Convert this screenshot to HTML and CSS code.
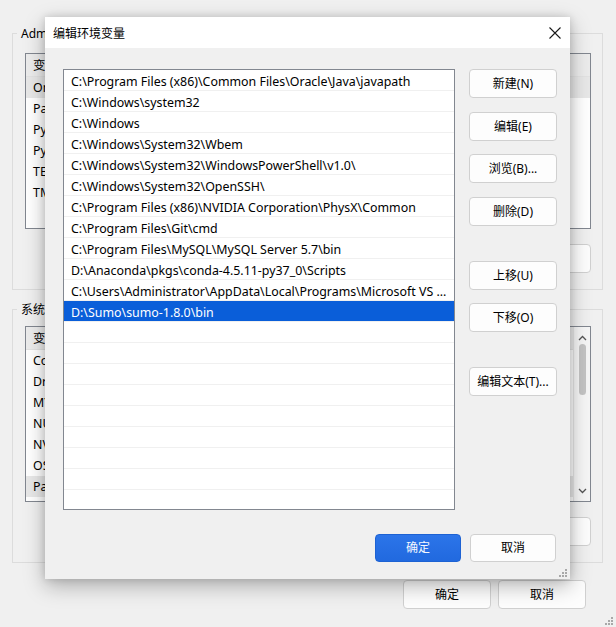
FILE: index.html
```html
<!DOCTYPE html>
<html lang="zh-CN">
<head>
<meta charset="utf-8">
<title>环境变量</title>
<link rel="stylesheet" href="styles.css">
</head>
<body>
<div class="window">
  <div class="group g1">
    <div class="group-title">Administrator 的用户变量(U)</div>
    <div class="lv lv-user">
      <div class="lv-main">
        <div class="lv-head"><span class="c1">变量</span><span class="c2">值</span></div>
        <div class="lv-row sel-inactive"><span class="c1">OneDrive</span><span class="c2">C:\Users\Administrator\OneDrive</span></div>
        <div class="lv-row"><span class="c1">Path</span><span class="c2">C:\Users\Administrator\AppData\Local\Programs</span></div>
        <div class="lv-row"><span class="c1">PyCharm</span><span class="c2">D:\PyCharm\bin;</span></div>
        <div class="lv-row"><span class="c1">PyCharm Community Edition</span><span class="c2">D:\PyCharm Community\bin;</span></div>
        <div class="lv-row"><span class="c1">TEMP</span><span class="c2">C:\Users\Administrator\AppData\Local\Temp</span></div>
        <div class="lv-row"><span class="c1">TMP</span><span class="c2">C:\Users\Administrator\AppData\Local\Temp</span></div>
      </div>
    </div>
    <div class="btn-row">
      <button class="btn">新建(N)...</button>
      <button class="btn">编辑(E)...</button>
      <button class="btn">删除(D)</button>
    </div>
  </div>

  <div class="group g2">
    <div class="group-title">系统变量(S)</div>
    <div class="lv lv-sys">
      <div class="lv-main">
        <div class="lv-head"><span class="c1">变量</span><span class="c2">值</span></div>
        <div class="lv-row"><span class="c1">ComSpec</span><span class="c2">C:\Windows\system32\cmd.exe</span></div>
        <div class="lv-row"><span class="c1">DriverData</span><span class="c2">C:\Windows\System32\Drivers\DriverData</span></div>
        <div class="lv-row"><span class="c1">MYSQL_HOME</span><span class="c2">C:\Program Files\MySQL\MySQL Server 5.7</span></div>
        <div class="lv-row"><span class="c1">NUMBER_OF_PROCESSORS</span><span class="c2">8</span></div>
        <div class="lv-row"><span class="c1">NVIDIA_APPUSER</span><span class="c2">C:\Program Files\NVIDIA</span></div>
        <div class="lv-row"><span class="c1">OS</span><span class="c2">Windows_NT</span></div>
        <div class="lv-row sel-inactive"><span class="c1">Path</span><span class="c2">C:\Program Files (x86)\Common Files\Oracle</span></div>
      </div>
      <div class="vscroll">
        <svg class="arr" width="9" height="6" viewBox="0 0 9 6"><path d="M1 5 L4.5 1.5 L8 5" fill="none" stroke="#555" stroke-width="1.3"/></svg>
        <div class="track"><div class="thumb"></div></div>
        <svg class="arr" width="9" height="6" viewBox="0 0 9 6"><path d="M1 1 L4.5 4.5 L8 1" fill="none" stroke="#555" stroke-width="1.3"/></svg>
      </div>
    </div>
    <div class="btn-row">
      <button class="btn">新建(W)...</button>
      <button class="btn">编辑(I)...</button>
      <button class="btn">删除(L)</button>
    </div>
  </div>

  <div class="footer">
    <button class="btn">确定</button>
    <button class="btn">取消</button>
  </div>
  <svg class="grip grip-win" width="9" height="9" viewBox="0 0 9 9"><g fill="#a8a8a8"><rect x="6" y="0" width="2" height="2"/><rect x="3" y="3" width="2" height="2"/><rect x="6" y="3" width="2" height="2"/><rect x="0" y="6" width="2" height="2"/><rect x="3" y="6" width="2" height="2"/><rect x="6" y="6" width="2" height="2"/></g></svg>
</div>

<div class="dialog">
  <div class="titlebar">
    <span class="title">编辑环境变量</span>
    <svg class="close" width="12" height="12" viewBox="0 0 12 12"><path d="M0.5 0.5 L11.5 11.5 M11.5 0.5 L0.5 11.5" stroke="#1a1a1a" stroke-width="1.1"/></svg>
  </div>
  <div class="dlg-body">
    <div class="pathlist">
      <div class="p-row">C:\Program Files (x86)\Common Files\Oracle\Java\javapath</div>
      <div class="p-row">C:\Windows\system32</div>
      <div class="p-row">C:\Windows</div>
      <div class="p-row">C:\Windows\System32\Wbem</div>
      <div class="p-row">C:\Windows\System32\WindowsPowerShell\v1.0\</div>
      <div class="p-row">C:\Windows\System32\OpenSSH\</div>
      <div class="p-row">C:\Program Files (x86)\NVIDIA Corporation\PhysX\Common</div>
      <div class="p-row">C:\Program Files\Git\cmd</div>
      <div class="p-row">C:\Program Files\MySQL\MySQL Server 5.7\bin</div>
      <div class="p-row">D:\Anaconda\pkgs\conda-4.5.11-py37_0\Scripts</div>
      <div class="p-row">C:\Users\Administrator\AppData\Local\Programs\Microsoft VS ...</div>
      <div class="p-row selected">D:\Sumo\sumo-1.8.0\bin</div>
      <div class="p-row"></div>
      <div class="p-row"></div>
      <div class="p-row"></div>
      <div class="p-row"></div>
      <div class="p-row"></div>
      <div class="p-row"></div>
      <div class="p-row"></div>
      <div class="p-row"></div>
      <div class="p-row"></div>
    </div>
    <div class="side">
      <div class="side-group">
        <button class="btn">新建(N)</button>
        <button class="btn">编辑(E)</button>
        <button class="btn">浏览(B)...</button>
        <button class="btn">删除(D)</button>
      </div>
      <div class="side-group">
        <button class="btn">上移(U)</button>
        <button class="btn">下移(O)</button>
      </div>
      <div class="side-group">
        <button class="btn">编辑文本(T)...</button>
      </div>
    </div>
    <div class="dlg-footer">
      <button class="btn primary">确定</button>
      <button class="btn">取消</button>
    </div>
  </div>
  <svg class="grip grip-dlg" width="9" height="9" viewBox="0 0 9 9"><g fill="#a8a8a8"><rect x="6" y="0" width="2" height="2"/><rect x="3" y="3" width="2" height="2"/><rect x="6" y="3" width="2" height="2"/><rect x="0" y="6" width="2" height="2"/><rect x="3" y="6" width="2" height="2"/><rect x="6" y="6" width="2" height="2"/></g></svg>
</div>
</body>
</html>
```

FILE: styles.css
```css
* { box-sizing: border-box; }

html, body {
  margin: 0;
  padding: 0;
  width: 616px;
  height: 627px;
  overflow: hidden;
  background: #f0f0f0;
}

body {
  font-family: "Noto Sans", "Noto Sans CJK SC", sans-serif;
  font-size: 12px;
  color: #000;
  position: relative;
}

.window {
  height: 627px;
  padding: 33px 13px 0 12px;
  position: relative;
}

.group {
  border: 1px solid #dcdcdc;
  padding: 0 11px 16px 12px;
}

.group-title {
  display: block;
  width: fit-content;
  height: 16px;
  line-height: 16px;
  margin: -8px 0 0 -8px;
  padding: 0 4px;
  background: #f0f0f0;
  white-space: nowrap;
}

.g1 .lv { margin-top: 11px; }
.g2 { margin-top: 19px; }
.g2 .lv { margin-top: 8px; }

.lv {
  height: 176px;
  border: 1px solid #828790;
  background: #fff;
  display: flex;
  overflow: hidden;
  font-size: 12.4px;
}

.lv-main { flex: 1; min-width: 0; }

.lv-head {
  height: 23px;
  line-height: 24px;
  display: flex;
  background: #ececec;
  border-bottom: 1px solid #e3e3e3;
}

.lv-row {
  height: 21px;
  line-height: 22px;
  display: flex;
}

.lv-row.sel-inactive { background: #e8e8e8; }

.c1 { width: 200px; padding-left: 7px; white-space: nowrap; overflow: hidden; }
.c2 { flex: 1; padding-left: 7px; white-space: nowrap; overflow: hidden; }

.vscroll {
  width: 17px;
  display: flex;
  flex-direction: column;
  align-items: center;
  padding: 8px 0 7px;
  background: #f6f6f6;
  border-left: 1px solid #e6e6e6;
}

.vscroll .track {
  flex: 1;
  width: 100%;
  display: flex;
  justify-content: center;
  padding-top: 3px;
}

.thumb {
  width: 7px;
  height: 51px;
  border-radius: 4px;
  background: #c4c4c4;
}

.btn-row {
  display: flex;
  justify-content: flex-end;
  gap: 7px;
  margin-top: 15px;
}

.btn {
  font-family: "Noto Sans", "Noto Sans CJK SC", sans-serif;
  font-size: 12px;
  color: #000;
  width: 88px;
  height: 29px;
  padding: 0;
  margin: 0;
  background: #fdfdfd;
  border: 1px solid #d0d0d0;
  border-radius: 4px;
  line-height: 27px;
  text-align: center;
  white-space: nowrap;
}

.footer {
  display: flex;
  justify-content: flex-end;
  gap: 7px;
  margin-top: 17px;
  padding-right: 17px;
}

.grip { position: absolute; display: block; }
.grip-win { right: 2px; bottom: 1px; }
.grip-dlg { right: 2px; bottom: 1px; }

/* Dialog */
.dialog {
  position: absolute;
  left: 45px;
  top: 17px;
  width: 525px;
  height: 562px;
  background: #f0f0f0;
  box-shadow: 0 7px 20px rgba(0, 0, 0, 0.28), 0 0 8px rgba(0, 0, 0, 0.14);
}

.titlebar {
  height: 31px;
  background: #fff;
  display: flex;
  align-items: center;
  justify-content: space-between;
  padding: 0 9px 0 8px;
}

.title {
  font-family: "Noto Sans CJK SC", sans-serif;
  font-size: 12px;
}

.close { display: block; margin-top: 1px; }

.dlg-body {
  display: grid;
  grid-template-columns: 392px 88px;
  column-gap: 14px;
  padding: 21px 13px 17px 18px;
}

.pathlist {
  height: 441px;
  border: 1px solid #828790;
  background: #fff;
  overflow: hidden;
}

.p-row {
  height: 21px;
  line-height: 23px;
  padding: 0 4px 0 7px;
  border-bottom: 1px solid #f0f0f0;
  white-space: nowrap;
  overflow: hidden;
  font-size: 12.4px;
}

.p-row.selected {
  background: #0a5ed9;
  color: #fff;
}

.side {
  display: flex;
  flex-direction: column;
  gap: 35px;
}

.side-group {
  display: flex;
  flex-direction: column;
  gap: 13.5px;
}

.dlg-footer {
  grid-column: 1 / -1;
  display: flex;
  justify-content: flex-end;
  gap: 9px;
  margin-top: 24px;
  padding-right: 1px;
}

.dlg-footer .btn {
  width: 86px;
  height: 28px;
  line-height: 26px;
}

.btn.primary {
  background: linear-gradient(#2c75e9, #2169df);
  border-color: #1d62d3;
  color: #f4f8ff;
}
```
